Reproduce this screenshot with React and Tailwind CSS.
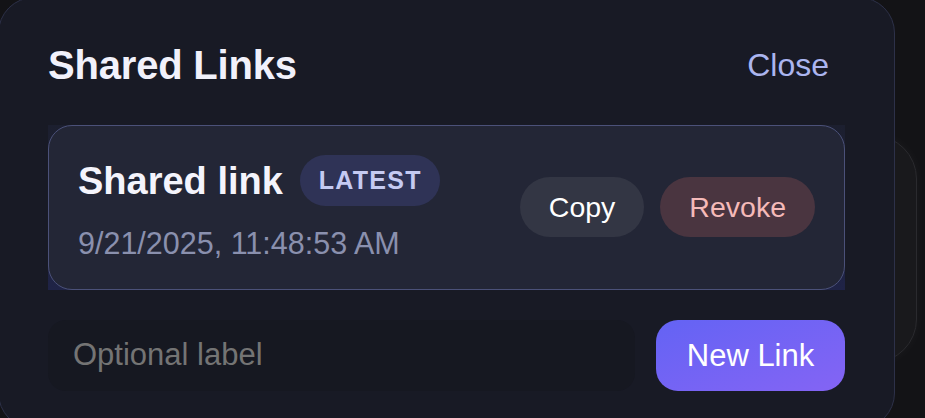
export default function App() {
  return (
    <div
      className="relative w-[925px] h-[418px] overflow-hidden bg-[#131316]"
      style={{ fontFamily: '"Liberation Sans", Arial, sans-serif' }}
    >
      {/* background page element behind the modal */}
      <div className="absolute left-[600px] top-[135px] w-[317px] h-[228px] rounded-[44px] bg-[#19191c] border border-[#2a2a2e] shadow-[0_0_12px_rgba(255,255,255,0.04)]" />

      {/* modal */}
      <div className="absolute left-[-2px] top-[-3px] w-[897px] h-[432px] rounded-[36px] bg-[#181a25] border border-[#2d3149] px-[49px] pt-[47px] flex flex-col">
        <div className="flex items-center justify-between">
          <h2 className="text-[40px] leading-none font-bold text-[#f1f1fb] tracking-[-0.2px]">
            Shared Links
          </h2>
          <button className="px-4 text-[32px] leading-none text-[#abb5ef]">Close</button>
        </div>

        <div className="mt-[40px] bg-gradient-to-b from-[#1c1f2f] to-[#1f2346]">
          <div className="rounded-[24px] border-[1.5px] border-[#4b5179] bg-[#232636] pl-[29px] pr-[29px] pt-[29px] pb-[30px] flex items-center justify-between">
            <div className="flex flex-col">
              <div className="flex items-center gap-[17px]">
                <span className="text-[38px] leading-none font-bold text-[#f4f4fc]">
                  Shared link
                </span>
                <span className="h-[51px] pl-[19px] pr-[18px] rounded-full bg-[#2f3356] text-[#c5caf2] text-[25px] font-bold tracking-[0.05em] flex items-center">
                  LATEST
                </span>
              </div>
              <span className="mt-[22px] text-[30.5px] leading-none text-[#8a90ae]">
                9/21/2025, 11:48:53 AM
              </span>
            </div>
            <div className="flex items-center gap-4">
              <button className="h-[60px] px-[29px] rounded-full bg-[#333644] text-white text-[28.5px] leading-none">
                Copy
              </button>
              <button className="h-[60px] px-[29px] rounded-full bg-[#4a3540] text-[#f5bab9] text-[28.5px] leading-none">
                Revoke
              </button>
            </div>
          </div>
        </div>

        <div className="mt-[30px] flex items-center gap-[21px]">
          <input
            placeholder="Optional label"
            className="flex-1 h-[71px] rounded-[18px] bg-[#161821] px-[25px] text-[31px] text-white placeholder:text-[#747474] outline-none"
          />
          <button className="h-[71px] w-[189px] rounded-[22px] bg-gradient-to-br from-[#6363f4] to-[#8464f4] text-white text-[31px] leading-none">
            New Link
          </button>
        </div>
      </div>
    </div>
  );
}
